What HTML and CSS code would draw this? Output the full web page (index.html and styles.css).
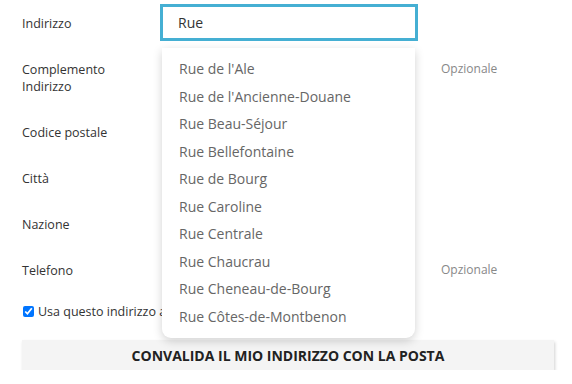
FILE: index.html
```html
<!DOCTYPE html>
<html lang="it">
<head>
  <meta charset="UTF-8">
  <meta name="viewport" content="width=device-width, initial-scale=1">
  <title>Indirizzo</title>
  <link rel="stylesheet" href="styles.css">
</head>
<body>
  <form class="address-form">
    <!-- Indirizzo with autocomplete -->
    <div class="row">
      <label for="street">Indirizzo</label>
      <div class="field">
        <input type="text" id="street" class="input-active" value="Rue" autofocus>
        <ul class="suggestions">
          <li>Rue de l'Ale</li>
          <li>Rue de l'Ancienne-Douane</li>
          <li>Rue Beau-Séjour</li>
          <li>Rue Bellefontaine</li>
          <li>Rue de Bourg</li>
          <li>Rue Caroline</li>
          <li>Rue Centrale</li>
          <li>Rue Chaucrau</li>
          <li>Rue Cheneau-de-Bourg</li>
          <li>Rue Côtes-de-Montbenon</li>
        </ul>
      </div>
    </div>

    <div class="row row-tall">
      <label>Complemento<br>Indirizzo</label>
      <div class="field"></div>
      <span class="hint">Opzionale</span>
    </div>

    <div class="row">
      <label>Codice postale</label>
      <div class="field"></div>
    </div>

    <div class="row">
      <label>Città</label>
      <div class="field"></div>
    </div>

    <div class="row">
      <label>Nazione</label>
      <div class="field"></div>
    </div>

    <div class="row">
      <label>Telefono</label>
      <div class="field"></div>
      <span class="hint">Opzionale</span>
    </div>

    <label class="check"><input type="checkbox" checked> <span class="check-text">Usa questo indirizzo anche per la fatturazione</span></label>

    <button type="button" class="validate">CONVALIDA IL MIO INDIRIZZO CON LA POSTA</button>
  </form>
</body>
</html>
```

FILE: styles.css
```css
body {
  margin: 0;
  background: #fff;
  font-family: 'Open Sans', 'Noto Sans', sans-serif;
  color: #333;
}
.address-form {
  width: 532px;
  padding: 4px 18px 0 22px;
}
.row {
  display: grid;
  grid-template-columns: 138px 258px auto;
  align-items: start;
}
.row label {
  font-size: 12.5px;
  line-height: 17px;
  padding: 11px 0 18px;
}
.row-tall label {
  padding-bottom: 18px;
}
.field {
  position: relative;
}
.input-active {
  width: 100%;
  height: 37px;
  box-sizing: border-box;
  border: 3px solid #45afd3;
  padding: 0 15px;
  font-family: inherit;
  font-size: 14px;
  color: #333;
  outline: none;
  caret-color: #222;
}
.suggestions {
  position: absolute;
  top: 44px;
  left: 2px;
  right: 3px;
  z-index: 2;
  margin: 0;
  padding: 7px 0 8px;
  list-style: none;
  background: #fff;
  border-radius: 0 0 9px 9px;
  box-shadow: 0 3px 10px rgba(0, 0, 0, 0.18);
}
.suggestions li {
  padding-left: 17px;
  font-size: 14px;
  line-height: 27.5px;
  color: #666;
}
.hint {
  margin-left: 23px;
  font-size: 12px;
  line-height: 17px;
  padding-top: 10px;
  color: #888;
}
.check {
  display: flex;
  align-items: center;
  gap: 4px;
  width: 142px;
  margin-top: 6px;
  font-size: 12.5px;
  line-height: 17px;
}
.check input {
  flex: none;
  margin: 0 0 0 1px;
  width: 11px;
  height: 11px;
}
.check-text {
  white-space: nowrap;
  overflow: hidden;
}
.validate {
  display: block;
  width: 532px;
  height: 30px;
  margin-top: 20px;
  border: none;
  background: #f4f4f4;
  box-shadow: 1px 2px 3px rgba(0, 0, 0, 0.18);
  font-family: inherit;
  font-size: 14px;
  font-weight: bold;
  color: #222;
}
```
